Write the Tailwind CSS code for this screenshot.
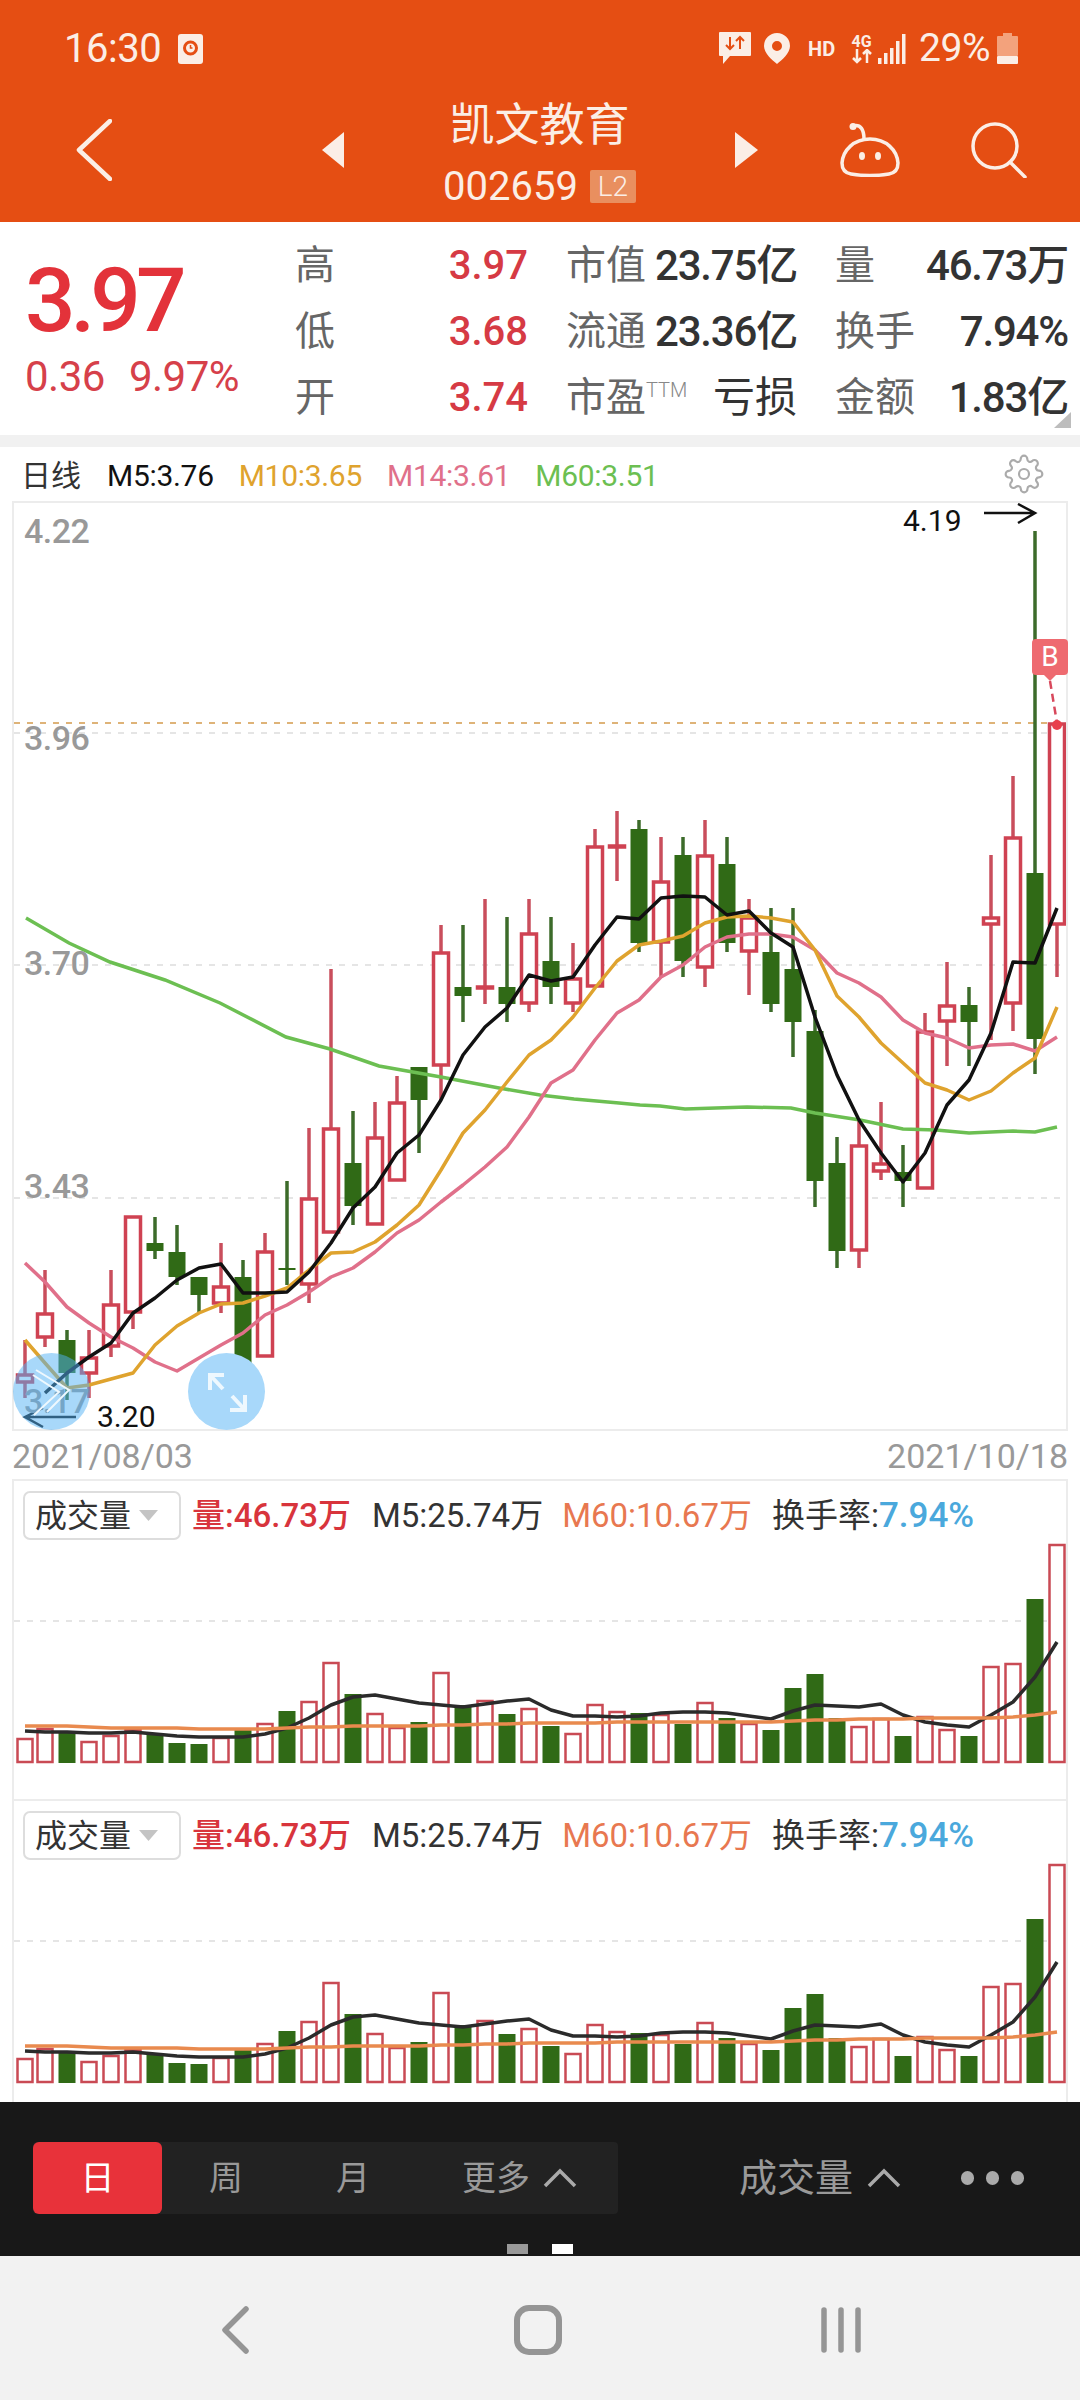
<!DOCTYPE html>
<html lang="zh-CN">
<head>
<meta charset="UTF-8">
<meta name="viewport" content="width=device-width, initial-scale=1.0">
<title>凯文教育 002659</title>
<script src="https://cdn.jsdelivr.net/npm/@tailwindcss/browser@4"></script>
</head>
<body class="bg-white font-['Roboto','Noto_Sans_CJK_SC',sans-serif] text-[#333]">
<div class="w-[1080px] h-[2400px] overflow-hidden flex flex-col">

  <!-- orange header -->
  <header class="h-[222px] bg-[#e54e13] text-[#fbeee6] flex flex-col shrink-0">
    <div class="h-[95px] flex items-center pl-[64px] pr-[62px] pt-[2px]">
      <span class="text-[40px] leading-none tracking-[-0.5px]">16:30</span>
      <svg class="ml-[17px]" width="25" height="30" viewBox="0 0 25 30"><rect width="25" height="30" rx="3" fill="#fbeee6"/><circle cx="12.5" cy="14" r="6" fill="none" stroke="#e54e13" stroke-width="3"/><path d="M12.5 11v3h2" stroke="#e54e13" stroke-width="1.5" fill="none"/></svg>
      <div class="ml-auto flex items-center">
        <svg width="32" height="33" viewBox="0 0 32 33"><path d="M1 0h30a1 1 0 0 1 1 1v22a1 1 0 0 1-1 1H11l-7 8v-8H1a1 1 0 0 1-1-1V1a1 1 0 0 1 1-1z" fill="#fbeee6"/><path d="M11 5v12M7 13l4 4 4-4M21 17V5M17 9l4-4 4 4" stroke="#e54e13" stroke-width="2" fill="none"/></svg>
        <svg class="ml-[13px]" width="26" height="31" viewBox="0 0 26 31"><path fill-rule="evenodd" d="M13 0a13 13 0 0 1 13 13c0 7-8 14-13 18C8 27 0 20 0 13A13 13 0 0 1 13 0zm0 8a5 5 0 1 0 0 10 5 5 0 0 0 0-10z" fill="#fbeee6"/></svg>
        <span class="ml-[18px] w-[26px] text-[20px] font-bold leading-none">HD</span>
        <div class="ml-[15px] w-[25px] flex flex-col items-center">
          <span class="text-[16px] font-bold leading-[15px]">4G</span>
          <svg width="22" height="15" viewBox="0 0 22 15"><path d="M6 0v13M2 9l4 4 4-4M16 14V1M12 5l4-4 4 4" stroke="#fbeee6" stroke-width="2.5" fill="none"/></svg>
        </div>
        <svg class="ml-[4px]" width="28" height="30" viewBox="0 0 28 30" fill="#fbeee6"><rect x="0" y="24" width="3.500" height="6"/><rect x="6" y="19" width="3.500" height="11"/><rect x="12" y="14" width="3.500" height="16"/><rect x="18" y="7" width="3.500" height="23"/><rect x="24" y="0" width="3.500" height="30"/></svg>
        <span class="ml-[13px] text-[39px] leading-none tracking-[-0.5px]">29%</span>
        <svg class="ml-[7px]" width="21" height="31" viewBox="0 0 21 31"><rect x="6" y="0" width="9" height="4" fill="#f3a27c"/><rect y="3" width="21" height="20" rx="1" fill="#f3a27c"/><rect y="23" width="21" height="8" rx="1" fill="#fbeee6"/></svg>
      </div>
    </div>
    <div class="h-[127px] pb-[17px] pl-[76px] flex items-center">
      <svg width="36" height="62" viewBox="0 0 36 62"><path d="M34 2 3 31l31 29" fill="none" stroke="#fbeee6" stroke-width="4.500" stroke-linecap="round" stroke-linejoin="round"/></svg>
      <svg class="ml-[210px]" width="22" height="36" viewBox="0 0 22 36"><path d="M22 0v36L0 18z" fill="#fbeee6"/></svg>
      <div class="w-[391px] pt-[7px] flex flex-col items-center">
        <span class="text-[45px] leading-[44px]">凯文教育</span>
        <div class="mt-[22px] flex items-center h-[34px]">
          <span class="text-[40px] leading-none">002659</span>
          <span class="ml-[12px] w-[46px] h-[33px] bg-[#e98f5f] rounded-[2px] text-[28px] leading-[33px] text-center font-light">L2</span>
        </div>
      </div>
      <svg width="23" height="36" viewBox="0 0 23 36"><path d="M0 0v36l23-18z" fill="#fbeee6"/></svg>
      <svg class="ml-[82px]" width="60" height="54" viewBox="0 0 60 54"><path d="M13 3c8-2 11 4 11 13" fill="none" stroke="#fbeee6" stroke-width="3.5"/><circle cx="13" cy="3.5" r="3.5" fill="#fbeee6"/><path d="M30 16C14 16 3 27 2 40c0 6 3 10 9 11 12 2 26 2 38 0 6-1 9-5 9-11-1-13-12-24-28-24z" fill="none" stroke="#fbeee6" stroke-width="3.5"/><ellipse cx="22" cy="33" rx="3" ry="4" fill="#fbeee6"/><ellipse cx="38" cy="33" rx="3" ry="4" fill="#fbeee6"/></svg>
      <svg class="ml-[71px]" width="56" height="56" viewBox="0 0 56 56"><circle cx="24" cy="24" r="22" fill="none" stroke="#fbeee6" stroke-width="3.5"/><path d="m39 40 15 15" stroke="#fbeee6" stroke-width="3.5" stroke-linecap="round"/></svg>
    </div>
  </header>

  <!-- quote summary -->
  <section class="relative h-[213px] shrink-0 flex">
    <div class="w-[295px] pl-[25px] pt-[37px] flex flex-col">
      <span class="text-[89px] leading-[84px] font-medium text-[#e3323a] tracking-[-5px]">3.97</span>
      <div class="mt-[14px] flex gap-[24px] text-[42px] leading-[40px] text-[#d6404a] tracking-[-0.5px]"><span>0.36</span><span>9.97%</span></div>
    </div>
    <div class="pt-[11px] flex flex-col w-[773px] text-[40px] leading-[66px] text-[#666]">
      <div class="h-[66px] flex">
        <div class="w-[233px] flex justify-between"><span>高</span><span class="font-medium text-[#d63a44] text-[40px]">3.97</span></div>
        <div class="ml-[38px] w-[231px] flex justify-between"><span>市值</span><span class="font-medium text-[#333] text-[42px] tracking-[-1.200px]">23.75亿</span></div>
        <div class="ml-[38px] w-[233px] flex justify-between"><span>量</span><span class="font-medium text-[#333] text-[42px] tracking-[-1.200px]">46.73万</span></div>
      </div>
      <div class="h-[66px] flex">
        <div class="w-[233px] flex justify-between"><span>低</span><span class="font-medium text-[#d63a44] text-[40px]">3.68</span></div>
        <div class="ml-[38px] w-[231px] flex justify-between"><span>流通</span><span class="font-medium text-[#333] text-[42px] tracking-[-1.200px]">23.36亿</span></div>
        <div class="ml-[38px] w-[233px] flex justify-between"><span>换手</span><span class="font-medium text-[#333] text-[42px] tracking-[-1.200px]">7.94%</span></div>
      </div>
      <div class="h-[66px] flex">
        <div class="w-[233px] flex justify-between"><span>开</span><span class="font-medium text-[#d63a44] text-[40px]">3.74</span></div>
        <div class="ml-[38px] w-[231px] flex justify-between"><span class="flex">市盈<span class="text-[20px] leading-[50px] font-light text-[#888]">TTM</span></span><span class="text-[#333] text-[42px]">亏损</span></div>
        <div class="ml-[38px] w-[233px] flex justify-between"><span>金额</span><span class="font-medium text-[#333] text-[42px] tracking-[-1.200px]">1.83亿</span></div>
      </div>
    </div>
    <svg class="absolute left-[1054px] top-[190px]" width="17" height="16" viewBox="0 0 17 16"><path d="M17 0v16H0z" fill="#bdbdbd"/></svg>
  </section>
  <div class="h-[12px] bg-[#f1f1f1] shrink-0"></div>

  <!-- MA legend -->
  <div class="h-[54px] shrink-0 flex items-center pl-[21px] text-[29px] leading-none">
    <span class="w-[86px] pt-[3px] text-[30px] text-[#333]">日线</span>
    <div class="flex gap-[25px] pt-[3px] text-[30px] tracking-[-0.3px]">
      <span class="text-[#111]">M5:3.76</span>
      <span class="text-[#dfa32e]">M10:3.65</span>
      <span class="text-[#e0708a]">M14:3.61</span>
      <span class="text-[#6cbf52]">M60:3.51</span>
    </div>
    <svg class="ml-auto mr-[36px]" width="40" height="40" viewBox="0 0 24 24" fill="none" stroke="#ababab" stroke-width="1.3"><circle cx="12" cy="12" r="3"/><path d="M19.4 15a1.65 1.65 0 0 0 .33 1.82l.06.06a2 2 0 0 1 0 2.83 2 2 0 0 1-2.83 0l-.06-.06a1.65 1.65 0 0 0-1.82-.33 1.65 1.65 0 0 0-1 1.51V21a2 2 0 0 1-2 2 2 2 0 0 1-2-2v-.09A1.65 1.65 0 0 0 9 19.4a1.65 1.65 0 0 0-1.82.33l-.06.06a2 2 0 0 1-2.83 0 2 2 0 0 1 0-2.83l.06-.06a1.65 1.65 0 0 0 .33-1.82 1.65 1.65 0 0 0-1.51-1H3a2 2 0 0 1-2-2 2 2 0 0 1 2-2h.09A1.65 1.65 0 0 0 4.6 9a1.65 1.65 0 0 0-.33-1.82l-.06-.06a2 2 0 0 1 0-2.83 2 2 0 0 1 2.83 0l.06.06a1.65 1.65 0 0 0 1.82.33H9a1.65 1.65 0 0 0 1-1.51V3a2 2 0 0 1 2-2 2 2 0 0 1 2 2v.09a1.65 1.65 0 0 0 1 1.51 1.65 1.65 0 0 0 1.82-.33l.06-.06a2 2 0 0 1 2.83 0 2 2 0 0 1 0 2.83l-.06.06a1.65 1.65 0 0 0-.33 1.82V9a1.65 1.65 0 0 0 1.51 1H21a2 2 0 0 1 2 2 2 2 0 0 1-2 2h-.09a1.65 1.65 0 0 0-1.51 1z"/></svg>
  </div>

  <!-- candlestick chart: coordinates inside the svg are page pixels -->
  <div class="relative mx-[12px] h-[930px] shrink-0 border-2 border-[#ececec]">
    <svg id="kline" class="block w-[1052px] h-[926px]" viewBox="14 503 1052 926"></svg>
    <span class="absolute left-[10px] top-[8px] text-[34px] leading-[40px] font-medium text-[#999] tracking-[-0.5px]">4.22</span>
    <span class="absolute left-[10px] top-[215px] text-[34px] leading-[40px] font-medium text-[#999] tracking-[-0.5px]">3.96</span>
    <span class="absolute left-[10px] top-[440px] text-[34px] leading-[40px] font-medium text-[#999] tracking-[-0.5px]">3.70</span>
    <span class="absolute left-[10px] top-[663px] text-[34px] leading-[40px] font-medium text-[#999] tracking-[-0.5px]">3.43</span>
    <span class="absolute left-[10px] top-[878px] text-[34px] leading-[40px] font-medium text-[#999] tracking-[-0.5px]">3.17</span>
    <span class="absolute left-[889px] top-[0px] text-[30px] leading-[36px] text-[#111]">4.19</span>
    <span class="absolute left-[83px] top-[896px] text-[30px] leading-[36px] text-[#111]">3.20</span>
    <!-- sell/buy marker -->
    <div class="absolute left-[1018px] top-[136px] w-[36px] h-[36px] rounded-[4px] bg-[#ee6a70] text-white text-[28px] leading-[36px] text-center">B</div>
    <!-- floating buttons -->
    <div class="absolute left-[-1px] top-[850px] w-[77px] h-[77px] rounded-full bg-[#51b1f5]/50 flex items-center justify-center">
      <svg width="77" height="77" viewBox="0 0 77 77" fill="none" stroke="#eef8fe" stroke-width="2"><path d="M23 17l33 20-22 22M20 22l26 17-25 23"/></svg>
    </div>
    <div class="absolute left-[174px] top-[850px] w-[77px] h-[77px] rounded-full bg-[#a8d8fa] flex items-center justify-center">
      <svg width="77" height="77" viewBox="0 0 77 77" fill="none" stroke="#eef8fe" stroke-width="4"><path d="M22 37V22h14M22 22l13 14M57 42v15H42M57 57 44 43"/></svg>
    </div>
  </div>
  <div class="h-[48px] shrink-0 flex justify-between items-start px-[12px] pt-[6px] text-[34px] leading-[38px] text-[#999]">
    <span>2021/08/03</span><span>2021/10/18</span>
  </div>

  <!-- volume panels -->
  <div class="relative mx-[12px] h-[320px] shrink-0 border-2 border-b-0 border-[#ececec]">
    <svg data-vol class="block w-[1052px] h-[290px]" viewBox="14 1481 1052 290"></svg>
    <div class="absolute left-[9px] top-[10px] flex items-center text-[33px] leading-none">
      <div class="w-[158px] h-[49px] border-2 border-[#ddd] rounded-[7px] flex items-center pl-[10px] text-[#333] text-[32px]">成交量<svg class="ml-[8px]" width="19" height="11" viewBox="0 0 19 11"><path d="M0 0h19l-9.500 11z" fill="#c4c4c4"/></svg></div>
      <span class="ml-[11px] font-medium text-[#d8343c]">量:46.73万</span>
      <span class="ml-[21px] text-[#333]">M5:25.74万</span>
      <span class="ml-[19px] text-[#e87850]">M60:10.67万</span>
      <span class="ml-[20px] text-[#333]">换手率:<span class="text-[#4aa8dc] font-medium text-[35px]">7.94%</span></span>
    </div>
  </div>
  <div class="relative mx-[12px] h-[303px] shrink-0 border-2 border-b-0 border-[#ececec]">
    <svg data-vol class="block w-[1052px] h-[301px]" viewBox="14 1481 1052 301"></svg>
    <div class="absolute left-[9px] top-[10px] flex items-center text-[33px] leading-none">
      <div class="w-[158px] h-[49px] border-2 border-[#ddd] rounded-[7px] flex items-center pl-[10px] text-[#333] text-[32px]">成交量<svg class="ml-[8px]" width="19" height="11" viewBox="0 0 19 11"><path d="M0 0h19l-9.500 11z" fill="#c4c4c4"/></svg></div>
      <span class="ml-[11px] font-medium text-[#d8343c]">量:46.73万</span>
      <span class="ml-[21px] text-[#333]">M5:25.74万</span>
      <span class="ml-[19px] text-[#e87850]">M60:10.67万</span>
      <span class="ml-[20px] text-[#333]">换手率:<span class="text-[#4aa8dc] font-medium text-[35px]">7.94%</span></span>
    </div>
  </div>

  <!-- period toolbar -->
  <div class="h-[154px] shrink-0 bg-[#181818] flex flex-col">
    <div class="mt-[40px] h-[72px] pl-[33px] flex items-center">
      <div class="w-[585px] h-[72px] bg-[#222] rounded-[4px] flex items-center text-[34px] text-[#999]">
        <span class="w-[129px] h-[72px] bg-[#e8323a] rounded-[6px] text-white text-center leading-[72px]">日</span>
        <span class="w-[128px] text-center">周</span>
        <span class="w-[126px] text-center">月</span>
        <span class="ml-[46px]">更多</span>
        <svg class="ml-[13px]" width="34" height="20" viewBox="0 0 34 20"><path d="M2 18 17 3l15 15" fill="none" stroke="#aaa" stroke-width="3.500"/></svg>
      </div>
      <span class="ml-[121px] text-[38px] text-[#999]">成交量</span>
      <svg class="ml-[14px]" width="34" height="20" viewBox="0 0 34 20"><path d="M2 18 17 3l15 15" fill="none" stroke="#aaa" stroke-width="3.500"/></svg>
      <div class="ml-[60px] flex gap-[12px]">
        <span class="w-[13px] h-[14px] rounded-full bg-[#aaa]"></span>
        <span class="w-[13px] h-[14px] rounded-full bg-[#aaa]"></span>
        <span class="w-[13px] h-[14px] rounded-full bg-[#aaa]"></span>
      </div>
    </div>
    <div class="mt-[30px] flex justify-center gap-[24px]">
      <span class="w-[21px] h-[10px] bg-[#999]"></span>
      <span class="w-[21px] h-[10px] bg-white"></span>
    </div>
  </div>

  <!-- android navigation -->
  <div class="h-[144px] shrink-0 bg-[#f2f2f2] flex items-center pl-[220px] pt-[4px]">
    <svg width="30" height="48" viewBox="0 0 30 48"><path d="M26 3 5 24l21 21" fill="none" stroke="#959595" stroke-width="5.500" stroke-linecap="round" stroke-linejoin="round"/></svg>
    <svg class="ml-[264px]" width="48" height="50" viewBox="0 0 48 50"><rect x="3" y="3" width="42" height="44" rx="12" fill="none" stroke="#959595" stroke-width="6"/></svg>
    <svg class="ml-[259px]" width="40" height="46" viewBox="0 0 40 46" stroke="#959595" stroke-width="5.500" stroke-linecap="round"><path d="M3 3v40M20 3v40M37 3v40"/></svg>
  </div>
</div>

<script>
  var RED_BODY = "#cf4252", RED_WICK = "#c94e5c", GREEN_BODY = "#306a16", GREEN_WICK = "#3c6b2a";
  // x position of candle i, in page pixels
  function cx(i) { return i == 0 ? 25 : i == 1 ? 45 : 23 + 22 * i; }

  // [wick top, body top, body bottom, wick bottom, colour]
  var candles = [
    [1340,1374,1383,1398,"r"],[1270,1313,1338,1347,"r"],[1330,1340,1373,1400,"g"],[1330,1357,1374,1398,"r"],
    [1270,1304,1347,1357,"r"],[1216,1216,1313,1329,"r"],[1217,1243,1251,1259,"g"],[1225,1252,1277,1285,"g"],
    [1277,1277,1295,1313,"g"],[1243,1286,1304,1313,"r"],[1260,1277,1364,1364,"g"],[1233,1251,1357,1357,"r"],
    [1181,1268,1270,1285,"g"],[1128,1198,1285,1303,"r"],[969,1128,1233,1233,"r"],[1111,1163,1206,1225,"g"],
    [1102,1137,1225,1225,"r"],[1076,1102,1181,1181,"r"],[1067,1067,1100,1153,"g"],[925,952,1066,1100,"r"],
    [925,987,996,1022,"g"],[899,986,988,1004,"r"],[917,987,1004,1022,"g"],[899,933,1004,1012,"r"],
    [917,961,987,1004,"g"],[943,978,1004,1012,"r"],[829,846,987,987,"r"],[811,845,847,881,"r"],
    [820,829,943,952,"g"],[837,881,943,978,"r"],[837,855,961,977,"g"],[820,855,968,987,"r"],
    [837,864,943,952,"g"],[899,917,952,995,"r"],[908,952,1004,1012,"g"],[908,969,1022,1057,"g"],
    [1010,1031,1181,1207,"g"],[1137,1163,1251,1268,"g"],[1120,1145,1251,1268,"r"],[1102,1163,1172,1180,"r"],
    [1145,1172,1181,1207,"g"],[1013,1031,1189,1189,"r"],[962,1005,1022,1066,"r"],[987,1005,1022,1066,"g"],
    [855,917,925,1040,"r"],[776,837,1004,1031,"r"],[531,873,1039,1074,"g"],[723,723,925,977,"r"]
  ];
  var ma5 = [null,1393,1373,1357,1343,1313,1298,1280,1268,1264,1293,1293,1292,1272,1243,1208,1187,1153,1135,1100,1055,1027,1008,975,981,977,945,917,919,898,896,897,915,911,933,947,1017,1075,1120,1153,1182,1153,1105,1080,1033,962,963,908];
  var ma10 = [1340,1363,1388,1385,1379,1373,1345,1326,1313,1304,1303,1296,1288,1270,1253,1252,1242,1225,1205,1170,1133,1110,1082,1055,1040,1017,988,961,945,941,936,923,917,916,918,922,950,996,1017,1043,1063,1083,1090,1100,1091,1073,1058,1007];
  var ma14 = [1263,1282,1307,1323,1337,1348,1362,1371,1358,1345,1333,1315,1305,1292,1277,1268,1252,1233,1220,1202,1185,1167,1147,1117,1083,1070,1040,1013,1000,977,965,947,937,934,934,937,950,973,983,997,1020,1033,1038,1048,1045,1044,1051,1037];
  var ma60 = "26,918 69,943 110,962 165,980 220,1003 286,1037 330,1049 379,1066 441,1077 499,1088 540,1095 574,1099 619,1103 640,1105 660,1106 685,1109 747,1107 791,1108 815,1113 860,1120 903,1129 936,1130 969,1133 1013,1131 1035,1132 1057,1127";

  // [bar top, colour]
  var bars = [[1738,"r"],[1728,"r"],[1732,"g"],[1741,"r"],[1735,"r"],[1729,"r"],[1735,"g"],[1743,"g"],[1744,"g"],[1737,"r"],[1728,"g"],[1723,"r"],[1711,"g"],[1701,"r"],[1662,"r"],[1694,"g"],[1713,"r"],[1727,"r"],[1722,"g"],[1672,"r"],[1705,"g"],[1700,"r"],[1714,"g"],[1708,"r"],
    [1726,"g"],[1733,"r"],[1704,"r"],[1711,"r"],[1713,"g"],[1714,"r"],[1724,"g"],[1702,"r"],[1718,"g"],[1723,"r"],[1730,"g"],[1688,"g"],[1674,"g"],[1718,"g"],[1726,"r"],[1718,"r"],[1736,"g"],[1716,"r"],[1729,"r"],[1736,"g"],[1666,"r"],[1663,"r"],[1599,"g"],[1544,"r"]];
  var volMa5 = [1731,1732,1732,1733,1733,1732,1734,1736,1737,1737,1737,1734,1728,1718,1705,1697,1695,1699,1703,1705,1707,1704,1701,1699,1710,1716,1716,1717,1716,1713,1712,1712,1713,1716,1719,1711,1705,1706,1707,1704,1715,1722,1725,1727,1715,1702,1677,1642];
  var volMa60 = [1726,1726,1726,1727,1728,1728,1728,1728,1729,1729,1729,1729,1728,1727,1727,1726,1726,1726,1726,1725,1725,1724,1724,1723,1723,1723,1723,1722,1722,1722,1722,1722,1722,1722,1722,1721,1720,1720,1719,1719,1719,1718,1718,1718,1718,1717,1715,1712];

  function rect(x, y, w, h, attrs) { return '<rect x="' + x + '" y="' + y + '" width="' + w + '" height="' + h + '" ' + attrs + '/>'; }
  function line(x1, y1, x2, y2, attrs) { return '<line x1="' + x1 + '" y1="' + y1 + '" x2="' + x2 + '" y2="' + y2 + '" ' + attrs + '/>'; }
  function polyline(values, color, width) {
    var pts = values.map(function (y, i) { return y == null ? "" : cx(i) + "," + y; }).join(" ");
    return '<polyline points="' + pts + '" fill="none" stroke="' + color + '" stroke-width="' + width + '" stroke-linejoin="round"/>';
  }
  function grid(y, color) { return line(14, y, 1066, y, 'stroke="' + color + '" stroke-width="1.5" stroke-dasharray="6 7"'); }

  // main chart
  var k = grid(733, "#dddddd") + grid(723, "#d49a4c") + grid(965, "#dddddd") + grid(1198, "#dddddd");
  candles.forEach(function (c, i) {
    var x = cx(i), red = c[4] == "r";
    var wick = 'stroke="' + (red ? RED_WICK : GREEN_WICK) + '" stroke-width="3.5"';
    if (c[1] > c[0]) k += line(x, c[0], x, c[1], wick);
    if (c[3] > c[2]) k += line(x, c[2], x, c[3], wick);
    if (red) k += rect(x - 7.5, c[1] + 1, 15, Math.max(c[2] - c[1] - 2, 1), 'fill="#fff" stroke="' + RED_BODY + '" stroke-width="3.5"');
    else k += rect(x - 8.500, c[1], 17, Math.max(c[2] - c[1], 2), 'fill="' + GREEN_BODY + '"');
  });
  k += '<polyline points="' + ma60 + '" fill="none" stroke="#6cbf52" stroke-width="3.5"/>';
  k += polyline(ma14, "#e0708a", 3.5) + polyline(ma10, "#dfa32e", 3.5) + polyline(ma5, "#111111", 3.5);
  // high and low arrows
  k += '<path d="M984 513h50M1018 504l17 9-17 10" fill="none" stroke="#111" stroke-width="2.500"/>';
  k += '<path d="M76 1417H26M43 1408l-18 9 18 10" fill="none" stroke="#111" stroke-width="2.500"/>';
  // buy marker tail
  k += '<path d="M1044 675h12l-6 6z" fill="#ee6a70"/><path d="M1050 681l7 42" stroke="#d8485c" stroke-width="2.500" stroke-dasharray="8 5"/><circle cx="1057" cy="725" r="5" fill="#e8404c"/>';
  document.getElementById("kline").innerHTML = k;

  // volume panels share one drawing
  var v = grid(1621, "#dddddd");
  bars.forEach(function (b, i) {
    var x = cx(i);
    if (b[1] == "r") v += rect(x - 7.5, b[0] + 1, 15, 1763 - b[0] - 2, 'fill="#fff" stroke="#c94a54" stroke-width="2.500"');
    else v += rect(x - 8.500, b[0], 17, 1763 - b[0], 'fill="' + GREEN_BODY + '"');
  });
  v += polyline(volMa5, "#2b2b2b", 3.5) + polyline(volMa60, "#e98a4e", 3.5);
  document.querySelectorAll("[data-vol]").forEach(function (el) { el.innerHTML = v; });
</script>
</body>
</html>
